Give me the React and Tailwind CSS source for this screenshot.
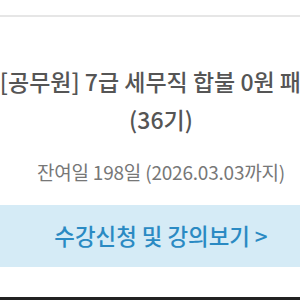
export default function App() {
  return (
    <div className="w-[300px] h-[300px] overflow-hidden bg-white relative" style={{ fontFamily: '"Noto Sans CJK KR", "Noto Sans", sans-serif' }}>
      <div className="w-[322px] flex flex-col">
        <div className="h-[15px]" />
        <div className="h-[2px] bg-[#e6e6e6]" />
        <div className="mt-[45px] flex flex-col items-center text-[23px] leading-[38px] font-medium text-[#555555] whitespace-nowrap">
          <span>[공무원] 7급 세무직 합불 0원 패스</span>
          <span>(36기)</span>
        </div>
        <div className="mt-[22px] text-center text-[19px] leading-[24px] text-[#777777] tracking-[-0.2px]">
          잔여일 198일 (2026.03.03까지)
        </div>
        <div className="mt-[21px] h-[62px] bg-[#d5ebf6] flex items-center justify-center text-[22.4px] font-medium text-[#2a8ac3]">
          수강신청 및 강의보기 &gt;
        </div>
        <div className="h-[30px]" />
        <div className="h-[10px] bg-[#222222]" />
      </div>
    </div>
  );
}
